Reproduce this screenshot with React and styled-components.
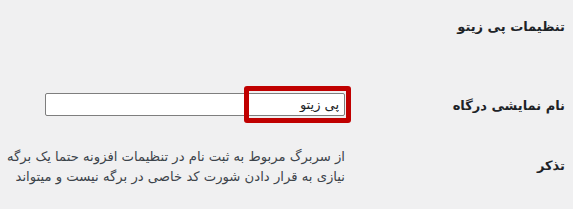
import styled, { createGlobalStyle } from "styled-components";

const GlobalStyle = createGlobalStyle`
  html, body {
    margin: 0;
    padding: 0;
    background: #f0f0f1;
  }
  body {
    font-family: "DejaVu Sans", Tahoma, sans-serif;
    color: #1d2327;
  }
`;

const App = () => {
  return (
    <>
      <GlobalStyle />
      <Wrap>
        <Title>تنظیمات پی زیتو</Title>
        <FormTable>
          <Row $top={56}>
            <Label $pad={3}>نام نمایشی درگاه</Label>
            <Field>
              <InputBox>
                <TextInput defaultValue="پی زیتو" />
                <Highlight />
              </InputBox>
            </Field>
          </Row>
          <Row $top={31}>
            <Label $pad={9}>تذکر</Label>
            <Field>
              <Description>
                از سربرگ مربوط به ثبت نام در تنظیمات افزونه حتما یک برگه
                <br />
                نیازی به قرار دادن شورت کد خاصی در برگه نیست و میتواند
              </Description>
            </Field>
          </Row>
        </FormTable>
      </Wrap>
    </>
  );
};

export default App;

const Wrap = styled.div`
  direction: rtl;
  padding: 0 8px 0 0;
  width: 573px;
  box-sizing: border-box;
  overflow: hidden;
  height: 209px;
`;

const Title = styled.h2`
  margin: 0;
  padding-top: 17px;
  font-size: 13px;
  font-weight: bold;
  line-height: 20px;
`;

const FormTable = styled.div`
  display: flex;
  flex-direction: column;
`;

const Row = styled.div`
  display: flex;
  align-items: flex-start;
  margin-top: ${({ $top }) => $top}px;
`;

const Label = styled.div`
  width: 220px;
  flex-shrink: 0;
  font-size: 13px;
  font-weight: bold;
  line-height: 20px;
  padding-top: ${({ $pad }) => $pad}px;
`;

const Field = styled.div`
  flex: 1;
`;

const InputBox = styled.div`
  position: relative;
  width: 300px;
  height: 23px;
`;

const TextInput = styled.input`
  direction: rtl;
  width: 300px;
  height: 23px;
  box-sizing: border-box;
  margin: 0;
  padding: 0 5px;
  border: 1px solid #7e7e7e;
  border-radius: 2px;
  background: #fff;
  font-family: "DejaVu Sans", Tahoma, sans-serif;
  font-size: 13px;
  color: #1d2327;
  outline: none;
`;

const Highlight = styled.span`
  position: absolute;
  top: -7px;
  right: -6px;
  width: 107px;
  height: 37px;
  box-sizing: border-box;
  border: 5px solid #c00000;
  border-radius: 3px;
  pointer-events: none;
`;

const Description = styled.p`
  margin: 0;
  font-size: 13.2px;
  line-height: 20px;
  color: #3c434a;
  white-space: nowrap;
`;
